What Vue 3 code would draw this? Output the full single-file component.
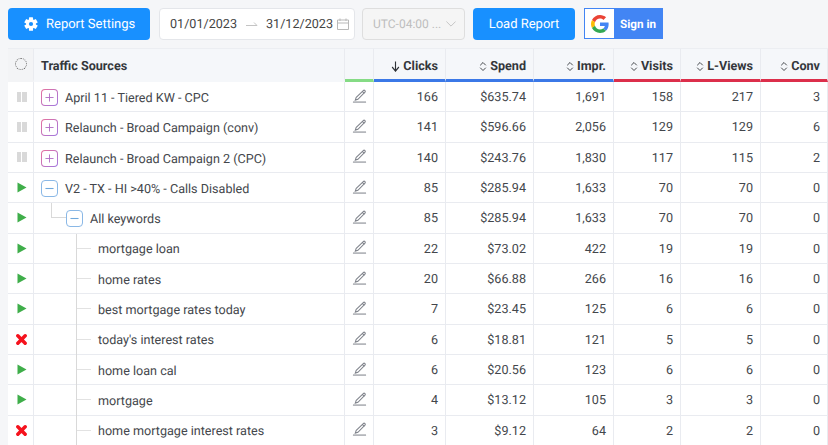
<script setup>
const columns = [
  { label: 'Clicks', key: 'clicks', sorted: true, color: 'blue' },
  { label: 'Spend', key: 'spend', color: 'blue' },
  { label: 'Impr.', key: 'impr', color: 'blue' },
  { label: 'Visits', key: 'visits', color: 'red' },
  { label: 'L-Views', key: 'views', color: 'red' },
  { label: 'Conv', key: 'conv', color: 'red' }
]

// status: pause / play / stop, level: 0 campaign, 1 group, 2 keyword
const rows = [
  { status: 'pause', level: 0, toggle: '+', name: 'April 11 - Tiered KW - CPC', clicks: 166, spend: '$635.74', impr: '1,691', visits: 158, views: 217, conv: 3 },
  { status: 'pause', level: 0, toggle: '+', name: 'Relaunch - Broad Campaign (conv)', clicks: 141, spend: '$596.66', impr: '2,056', visits: 129, views: 129, conv: 6 },
  { status: 'pause', level: 0, toggle: '+', name: 'Relaunch - Broad Campaign 2 (CPC)', clicks: 140, spend: '$243.76', impr: '1,830', visits: 117, views: 115, conv: 2 },
  { status: 'play', level: 0, toggle: '-', name: 'V2 - TX - HI >40% - Calls Disabled', clicks: 85, spend: '$285.94', impr: '1,633', visits: 70, views: 70, conv: 0 },
  { status: 'play', level: 1, toggle: '-', name: 'All keywords', clicks: 85, spend: '$285.94', impr: '1,633', visits: 70, views: 70, conv: 0 },
  { status: 'play', level: 2, name: 'mortgage loan', clicks: 22, spend: '$73.02', impr: '422', visits: 19, views: 19, conv: 0 },
  { status: 'play', level: 2, name: 'home rates', clicks: 20, spend: '$66.88', impr: '266', visits: 16, views: 16, conv: 0 },
  { status: 'play', level: 2, name: 'best mortgage rates today', clicks: 7, spend: '$23.45', impr: '125', visits: 6, views: 6, conv: 0 },
  { status: 'stop', level: 2, name: "today's interest rates", clicks: 6, spend: '$18.81', impr: '121', visits: 5, views: 5, conv: 0 },
  { status: 'play', level: 2, name: 'home loan cal', clicks: 6, spend: '$20.56', impr: '123', visits: 6, views: 6, conv: 0 },
  { status: 'play', level: 2, name: 'mortgage', clicks: 4, spend: '$13.12', impr: '105', visits: 3, views: 3, conv: 0 },
  { status: 'stop', level: 2, name: 'home mortgage interest rates', clicks: 3, spend: '$9.12', impr: '64', visits: 2, views: 2, conv: 0 }
]

const teeth = [0, 60, 120, 180, 240, 300]
</script>

<template>
  <div class="page">
    <div class="toolbar">
      <button class="btn settings-btn">
        <svg class="gear" viewBox="0 0 24 24" width="14" height="14">
          <rect v-for="t in teeth" :key="t" x="8.500" y="0.500" width="7" height="6" rx="1" fill="#fff" :transform="'rotate(' + t + ' 12 12)'" />
          <circle cx="12" cy="12" r="8.500" fill="#fff" />
          <circle cx="12" cy="12" r="3.600" fill="#1890ff" />
        </svg>
        <span>Report Settings</span>
      </button>

      <div class="range">
        <span>01/01/2023</span>
        <svg class="arrow" viewBox="0 0 12 6" width="12" height="6">
          <path d="M0 4.500h11L8 1.500" fill="none" stroke="#c4c4c4" stroke-width="1" />
        </svg>
        <span>31/12/2023</span>
        <svg class="calendar" viewBox="0 0 12 12" width="12" height="12">
          <path d="M.5 2h11v9.500H.5zM.5 5h11M3 .5V3M9 .5V3" fill="none" stroke="#b9b9b9" stroke-width="1" />
        </svg>
      </div>

      <div class="zone">
        <span>UTC-04:00 ...</span>
        <svg viewBox="0 0 12 7" width="10" height="6">
          <path d="M.5 .5 6 6 11.500 .5" fill="none" stroke="#bdbdbd" stroke-width="1" />
        </svg>
      </div>

      <button class="btn load-btn">Load Report</button>

      <div class="google">
        <span class="google-icon">
          <svg viewBox="0 0 48 48" width="18" height="18">
            <path fill="#EA4335" d="M24 9.500c3.500 0 6.700 1.200 9.200 3.600l6.900-6.900C35.900 2.400 30.500 0 24 0 14.600 0 6.500 5.400 2.600 13.200l8 6.200C12.500 13.700 17.800 9.500 24 9.500z" />
            <path fill="#4285F4" d="M47 24.500c0-1.600-.1-3.100-.4-4.500H24v9h12.900c-.6 3-2.200 5.400-4.700 7.100l7.700 6C44.400 38 47 31.800 47 24.500z" />
            <path fill="#FBBC05" d="M10.600 28.600c-.5-1.400-.8-3-.8-4.600s.3-3.200.8-4.600l-8-6.200C.9 16.400 0 20.100 0 24s.9 7.600 2.600 10.800z" />
            <path fill="#34A853" d="M24 48c6.500 0 11.900-2.100 15.900-5.900l-7.700-6c-2.200 1.400-4.900 2.300-8.200 2.300-6.200 0-11.500-4.200-13.400-9.800l-8 6.200C6.500 42.600 14.600 48 24 48z" />
          </svg>
        </span>
        <span class="google-text">Sign in</span>
      </div>
    </div>

    <table class="grid">
      <colgroup>
        <col style="width: 26px" />
        <col style="width: 311px" />
        <col style="width: 29px" />
        <col style="width: 72px" />
        <col style="width: 88px" />
        <col style="width: 80px" />
        <col style="width: 67px" />
        <col style="width: 80px" />
        <col style="width: 67px" />
      </colgroup>
      <thead>
        <tr>
          <th class="select-head">
            <span class="dotted"></span>
          </th>
          <th class="name-head">Traffic Sources</th>
          <th class="edit-head"></th>
          <th v-for="col in columns" :key="col.key" class="num-head" :class="col.color">
            <svg v-if="col.sorted" class="sort" viewBox="0 0 12 12" width="9" height="11" preserveAspectRatio="none">
              <path d="M6 .5v10.500M1.500 6.500 6 11l4.500-4.500" fill="none" stroke="#2f3237" stroke-width="1.500" />
            </svg>
            <svg v-else class="sort" viewBox="0 0 10 13" width="8" height="11">
              <path d="M1.500 5 5 1.500 8.500 5M1.500 8 5 11.500 8.500 8" fill="none" stroke="#2f3237" stroke-width="1.100" />
            </svg>
            {{ col.label }}
          </th>
        </tr>
      </thead>
      <tbody>
        <tr v-for="row in rows" :key="row.name">
          <td class="status">
            <span v-if="row.status === 'pause'" class="pause"><i></i><i></i></span>
            <svg v-else-if="row.status === 'play'" viewBox="0 0 10 11" width="10" height="11">
              <path d="M.5 .5 9.500 5.500.5 10.500z" fill="#3fae4a" />
            </svg>
            <svg v-else viewBox="0 0 12 12" width="11" height="11">
              <path d="M2 2l8 8M10 2l-8 8" stroke="#f5121d" stroke-width="3.800" stroke-linecap="round" />
            </svg>
          </td>
          <td class="name" :class="'level-' + row.level">
            <span v-if="row.level === 1" class="tree-elbow"></span>
            <template v-if="row.level === 2">
              <span class="tree-trunk"></span>
              <span class="tree-leaf"></span>
            </template>
            <span v-if="row.toggle" class="toggle" :class="row.toggle === '+' ? 'closed' : 'open'">
              <svg viewBox="0 0 10 10" width="9" height="9">
                <path v-if="row.toggle === '+'" d="M5 .5v9M.5 5h9" stroke="#b06cc4" stroke-width="1" fill="none" />
                <path v-else d="M.5 5h9" stroke="#6fa8dc" stroke-width="1.200" fill="none" />
              </svg>
            </span>
            <span class="label">{{ row.name }}</span>
          </td>
          <td class="edit">
            <svg viewBox="0 0 16 16" width="15" height="15">
              <path d="M4.500 10 12 2.700c.5-.5 1.300-.5 1.800 0s.5 1.300 0 1.800L6.300 12l-2.800.9zM11 3.700l2.300 2.300" fill="none" stroke="#7f838b" stroke-width="1.100" />
              <path d="M1 15h14" stroke="#7f838b" stroke-width="1.100" />
            </svg>
          </td>
          <td v-for="col in columns" :key="col.key" class="num">{{ row[col.key] }}</td>
        </tr>
      </tbody>
    </table>
  </div>
</template>

<style scoped>
.page {
  width: 828px;
  height: 445px;
  overflow: hidden;
  background: #f5f6f8;
  font-family: Roboto, "Liberation Sans", sans-serif;
  text-rendering: geometricPrecision;
  color: #3c3f44;
  box-sizing: border-box;
  padding-top: 8px;
}

.toolbar {
  display: flex;
  align-items: flex-start;
  height: 32px;
  margin: 0 0 8px 8px;
}

.btn {
  height: 32px;
  border: none;
  border-radius: 4px;
  background: #1890ff;
  color: #fff;
  font-family: inherit;
  text-rendering: geometricPrecision;
  font-size: 13px;
  padding: 0;
}

.settings-btn {
  width: 142px;
  display: flex;
  align-items: center;
  gap: 8px;
  padding-left: 16px;
}

.range {
  margin-left: 9px;
  width: 196px;
  height: 32px;
  box-sizing: border-box;
  background: #fff;
  border: 1px solid #e4e6ea;
  border-radius: 4px;
  display: flex;
  align-items: center;
  padding-left: 10px;
  font-size: 12.600px;
  color: #444;
}

.arrow {
  margin: 0 8px 0 9px;
}

.calendar {
  margin-left: 4px;
}

.zone {
  margin-left: 7px;
  width: 103px;
  height: 32px;
  box-sizing: border-box;
  background: #f5f5f5;
  border: 1px solid #dedede;
  border-radius: 4px;
  display: flex;
  align-items: center;
  gap: 5px;
  padding-left: 10px;
  font-size: 12px;
  color: #bdbdbd;
}

.load-btn {
  margin-left: 8px;
  width: 102px;
}

.google {
  margin-left: 9px;
  width: 79px;
  height: 31px;
  box-sizing: border-box;
  border: 1px solid #4285f4;
  display: flex;
  background: #4285f4;
}

.google-icon {
  width: 29px;
  background: #fff;
  display: flex;
  align-items: center;
  justify-content: center;
}

.google-text {
  flex: 1;
  color: #fff;
  font-size: 11.700px;
  font-weight: 700;
  display: flex;
  align-items: center;
  justify-content: center;
}

.grid {
  margin-left: 8px;
  width: 820px;
  table-layout: fixed;
  border-collapse: separate;
  border-spacing: 0;
  background: #fff;
  font-size: 12.600px;
}

th {
  box-sizing: border-box;
  height: 34px;
  padding: 4px 0 0;
  background: #f5f7fa;
  border-top: 1px solid #eceef2;
  border-right: 1px solid #e9ebf0;
  border-bottom: 3px solid transparent;
  font-size: 12.600px;
  font-weight: 700;
  color: #33363b;
}

th.select-head {
  padding-top: 0;
  background: #f3f4f6;
  border-bottom-color: #f3f4f6;
}

.dotted {
  display: block;
  width: 10px;
  height: 10px;
  margin: 0 auto;
  border: 1px dotted #666;
  border-radius: 50%;
}

th.name-head {
  text-align: left;
  padding-left: 7px;
  border-bottom-color: #f5f7fa;
}

.edit-head {
  border-bottom-color: #85db85;
}

th.num-head {
  text-align: right;
  padding-right: 7px;
}

.num-head.blue {
  border-bottom-color: #3b78e7;
}

.num-head.red {
  border-bottom-color: #dc2f4b;
}

.sort {
  vertical-align: -2px;
}

td {
  box-sizing: border-box;
  height: 30.330px;
  padding: 0;
  border-right: 1px solid #e9ebf0;
  border-bottom: 1px solid #e9ebf0;
  white-space: nowrap;
}

.status {
  text-align: center;
  line-height: 0;
  padding-left: 2px;
}

.pause {
  display: inline-flex;
  gap: 1px;
}

.pause i {
  width: 4.500px;
  height: 10px;
  background: #d9d9d9;
}

.name {
  position: relative;
  color: #43464b;
  padding: 2px 0 0 7px;
}

.toggle {
  vertical-align: middle;
}

.label {
  vertical-align: -1px;
}

.level-1 {
  padding-left: 32px;
}

.level-2 {
  padding-left: 64px;
}

.toggle {
  display: inline-flex;
  align-items: center;
  justify-content: center;
  box-sizing: border-box;
  width: 17px;
  height: 17px;
  margin-right: 7px;
  border-radius: 4px;
  border: 1px solid transparent;
}

.toggle.closed {
  background: linear-gradient(#fff, #fff) padding-box, linear-gradient(135deg, #e8709c, #a078e0) border-box;
}

.toggle.open {
  border-color: #8ab8e6;
  background: #fff;
}

/* tree lines lie over the cell */
.tree-elbow {
  position: absolute;
  left: 17px;
  top: 0;
  width: 14px;
  height: 14px;
  border-left: 1px solid #d9d9d9;
  border-bottom: 1px solid #d9d9d9;
}

.tree-trunk {
  position: absolute;
  left: 42px;
  top: 0;
  bottom: -1px;
  border-left: 1px solid #d9d9d9;
}

.tree-leaf {
  position: absolute;
  left: 43px;
  top: 14px;
  width: 14px;
  border-top: 1px solid #e2e2e2;
}

.edit {
  text-align: center;
  line-height: 0;
  padding-bottom: 3px;
}

.num {
  text-align: right;
  padding: 2px 7px 0 0;
  color: #43464b;
}
</style>

<style>
html,
body {
  margin: 0;
  background: #f5f6f8;
}
</style>
